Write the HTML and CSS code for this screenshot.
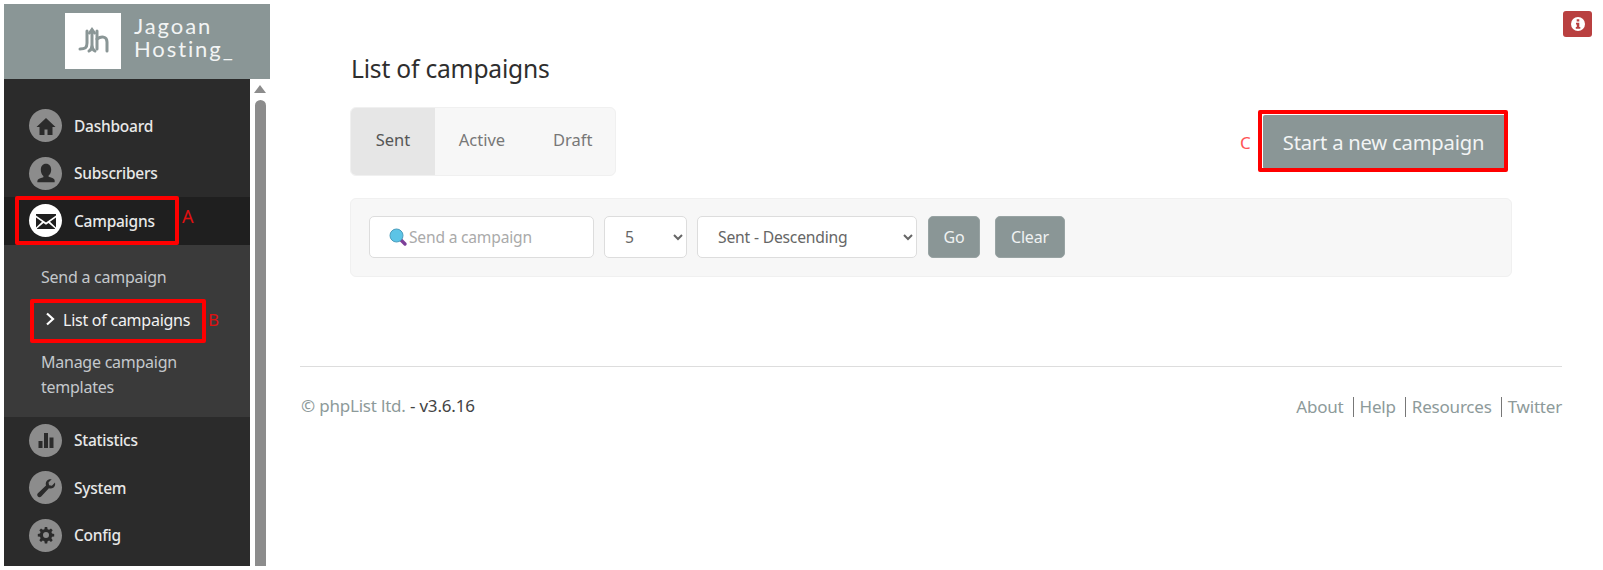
FILE: index.html
```html
<!DOCTYPE html>
<html lang="en">
<head>
<meta charset="utf-8">
<title>List of campaigns</title>
<link rel="stylesheet" href="styles.css">
</head>
<body>
<div class="page">
  <aside class="sidebar">
    <header class="brand">
      <div class="logo">
        <svg viewBox="0 0 56 56" width="56" height="56"><g fill="none" stroke="#8a9696" stroke-width="3" stroke-linecap="round"><path d="M22 18v12c0 5-2 6-7 6"/><path d="M32 18v18"/><path d="M24.500 20l2.500-3.500 2.500 3.500"/><path d="M27 20v12c0 3-1 5-3 6M27 32c0 3 1 5 3 6"/><path d="M32 26c4-3 10-3 10 3v9"/></g></svg>
      </div>
      <div class="brand-name">Jagoan<br>Hosting_</div>
    </header>
    <div class="nav-wrap">
      <nav class="nav">
        <a class="item"><span class="circle"><svg viewBox="0 0 24 24" width="24" height="24"><path fill="#2b2b2b" d="M12 4 2.500 13h3v8h5v-5.500h3V21h5v-8h3z"/></svg></span>Dashboard</a>
        <a class="item"><span class="circle"><svg viewBox="0 0 24 24" width="26" height="26"><path fill="#2b2b2b" d="M12 3.500c3 0 4.800 2.400 4.800 5.400 0 2.300-1 4.300-2.400 5.300v1.300c3.200.8 5.600 1.800 5.600 3.500v1.500H4V19.500c0-1.700 2.400-2.700 5.600-3.500v-1.300C8.200 13.700 7.200 11.700 7.200 8.900c0-3 1.800-5.400 4.800-5.400z"/></svg></span>Subscribers</a>
        <a class="item item-current"><span class="circle circle-on"><svg viewBox="0 0 24 24" width="24" height="24"><path fill="#1f1f1f" d="M2 5h20v1.500l-10 7-10-7zM2 8.500l6 4.300-6 5.700zM22 8.500v10l-6-5.700zM9.500 14l2.500 1.700 2.500-1.700 6.500 5.500v.5H3v-.5z"/></svg></span>Campaigns</a>
        <div class="sub">
          <a class="sub-item">Send a campaign</a>
          <a class="sub-item sub-active"><svg class="chev" viewBox="0 0 10 14" width="10" height="14"><path d="M2 1.500 8 7l-6 5.500" fill="none" stroke="#fff" stroke-width="2.200"/></svg>List of campaigns</a>
          <a class="sub-item">Manage campaign templates</a>
        </div>
        <a class="item"><span class="circle"><svg viewBox="0 0 24 24" width="24" height="24"><path fill="#2b2b2b" d="M4.500 13h4v7h-4zM10 5h4v15h-4zM15.500 9.500h4V20h-4z"/></svg></span>Statistics</a>
        <a class="item"><span class="circle"><svg viewBox="0 0 24 24" width="24" height="24"><path fill="#2b2b2b" d="M21 6.500c.5 2.300-.1 4.200-1.700 5.300-1.300.9-3 1-4.400.5L7.200 20.500c-.9.900-2.500.9-3.300 0-.9-.9-.9-2.300 0-3.200l8.100-7.800c-.5-1.500-.3-3.200.7-4.500C13.800 3.400 15.700 2.800 17.700 3.300L14.500 6.400l.6 2.800 2.800.6z"/></svg></span>System</a>
        <a class="item"><span class="circle"><svg viewBox="0 0 24 24" width="24" height="24"><path fill="#2b2b2b" fill-rule="evenodd" d="M10.800 4h2.400l.4 2.200 1.500.6 1.900-1.300 1.700 1.700-1.300 1.900.6 1.500 2.200.4v2.400l-2.200.4-.6 1.500 1.300 1.900-1.700 1.700-1.900-1.300-1.500.6-.4 2.200h-2.400l-.4-2.200-1.500-.6-1.900 1.300-1.700-1.700 1.300-1.900-.6-1.500-2.200-.4v-2.400l2.200-.4.6-1.500-1.300-1.900 1.700-1.700 1.900 1.300 1.500-.6zM12 9a3 3 0 1 0 0 6 3 3 0 0 0 0-6z"/></svg></span>Config</a>
      </nav>
      <div class="scrollbar"><span class="scroll-arrow"></span><span class="scroll-thumb"></span></div>
    </div>
  </aside>
  <main class="main">
    <div class="content">
      <h1 class="title">List of campaigns</h1>
      <div class="toolbar">
        <ul class="tabs">
          <li class="tab tab-active">Sent</li>
          <li class="tab tab-active-next">Active</li>
          <li class="tab">Draft</li>
        </ul>
        <a class="start-btn">Start a new campaign</a>
      </div>
      <form class="filters">
        <label class="search">
          <svg viewBox="0 0 20 20" width="20" height="20"><path d="M12.500 12.500 17 17" stroke="#7d3f98" stroke-width="3.400" stroke-linecap="round"/><circle cx="8.500" cy="8.500" r="6.500" fill="#5cc4e6" stroke="#4a9dbd"/></svg>
          <input class="search-input" type="text" placeholder="Send a campaign">
        </label>
        <select class="select select-num"><option>5</option></select>
        <select class="select select-sort"><option>Sent - Descending</option></select>
        <button class="btn btn-go" type="button">Go</button>
        <button class="btn" type="button">Clear</button>
      </form>
    </div>
    <footer class="footer">
      <div><a class="muted">© phpList ltd.</a> - v3.6.16</div>
      <div class="links"><a>About</a><a class="sep">Help</a><a class="sep">Resources</a><a class="sep">Twitter</a></div>
    </footer>
  </main>
  <span class="info"><svg viewBox="0 0 16 16" width="16" height="16"><circle cx="8" cy="8" r="7" fill="#fff"/><path fill="#b94040" d="M6.700 3.300h2.600v2.200H6.700zM6 6.700h3.300v4.300h1v1.700H5.800V11h1V8.400H6z"/></svg></span>
  <span class="mark mark-a"></span><span class="tag tag-a">A</span>
  <span class="mark mark-b"></span><span class="tag tag-b">B</span>
  <span class="mark mark-c"></span><span class="tag tag-c">C</span>
</div>
</body>
</html>
```
FILE: styles.css
```css
* { box-sizing: border-box; }
html, body { margin: 0; height: 100%; overflow: hidden; background: #fff; }
body { font-family: "Noto Sans", "Open Sans", sans-serif; color: #333; }
a { color: inherit; text-decoration: none; }

.page { position: relative; display: flex; width: 1603px; height: 570px; padding: 4px 0 4px 4px; }

.sidebar { width: 266px; display: flex; flex-direction: column; flex: none; }
.brand { height: 75px; background: #8a9696; display: flex; align-items: center; padding: 0 0 0 61px; gap: 13px; flex: none; }
.logo { width: 56px; height: 56px; background: #fff; flex: none; margin-top: -1px; }
.logo svg { display: block; }
.brand-name { font-family: "Lato", sans-serif; color: #f2f4f4; font-size: 22px; line-height: 23px; letter-spacing: 1.900px; margin-top: -10px; }

.nav-wrap { flex: 1; display: flex; min-height: 0; }
.nav { width: 246px; background: #2b2b2b; padding-top: 23px; flex: none; }
.item { display: flex; align-items: center; height: 47.500px; padding-left: 25px; color: #e8e8e8; font-size: 15.500px; font-weight: 500; gap: 12px; letter-spacing: -.25px; }
.item-current { background: #1f1f1f; }
.circle { width: 33px; height: 33px; border-radius: 50%; background: #8c8c8c; display: flex; align-items: center; justify-content: center; flex: none; }
.circle-on { background: #fff; }
.sub { background: #3a3a3a; padding: 20px 0 0; height: 172px; }
.sub-item { display: block; padding: 0 30px 0 37px; color: #c4c8cc; font-size: 16px; line-height: 25px; margin-bottom: 18px; letter-spacing: -.25px; }
.sub-active { color: #f2f2f2; padding-left: 41px; margin-bottom: 17px; display: flex; align-items: center; gap: 8px; white-space: nowrap; }
.chev { flex: none; margin-top: -3px; }

.scrollbar { width: 20px; display: flex; flex-direction: column; align-items: center; background: #fff; flex: none; }
.scroll-arrow { width: 0; height: 0; border-left: 6px solid transparent; border-right: 6px solid transparent; border-bottom: 8px solid #8c8c8c; margin-top: 6px; }
.scroll-thumb { flex: 1; width: 11px; margin-top: 7px; background: #8c8c8c; border-radius: 6px 6px 0 0; }

.main { flex: 1; min-width: 0; padding: 0 41px 0 30px; }
.content { padding: 0 50px; }
.title { font-size: 24.600px; font-weight: 400; line-height: 32px; margin: 49px 0 0 1px; color: #2e2e2e; letter-spacing: -.2px; }
.toolbar { display: flex; justify-content: space-between; align-items: center; margin-top: 22px; height: 69px; }
.tabs { list-style: none; margin: 0; padding: 0; display: flex; height: 69px; width: 266px; background: #f7f7f7; border: 1px solid #f0f0f0; border-radius: 6px; overflow: hidden; }
.tab { display: flex; align-items: center; justify-content: center; font-size: 16.500px; color: #777; padding: 0 0 4px 26px; }
.tab-active { width: 84px; background: #e6e6e6; color: #555; padding: 0 0 4px; }
.tab-active-next { width: 92px; padding: 0 0 4px 2px; }
.start-btn { width: 243px; height: 54px; margin: 0 6px 0 0; padding-right: 2px; background: #8a9696; color: #f2f4f4; display: flex; align-items: center; justify-content: center; font-size: 20.200px; letter-spacing: -.2px; border-radius: 2px; }
.filters { display: flex; align-items: center; margin-top: 22px; height: 79px; padding: 0 18px 2px 18px; background: #f7f7f7; border: 1px solid #f0f0f0; border-radius: 6px; }
.search { display: flex; align-items: center; width: 225px; height: 42px; background: #fff; border: 1px solid #ddd; border-radius: 5px; padding-left: 18px; gap: 1px; flex: none; }
.search svg { flex: none; }
.search-input { border: 0; outline: 0; flex: 1; min-width: 0; font: inherit; font-size: 15.600px; letter-spacing: -.2px; background: transparent; padding: 0; }
.search-input::placeholder { color: #aaa; opacity: 1; }
.select { height: 42px; background-color: #fff; border: 1px solid #ddd; border-radius: 5px; font: inherit; font-size: 15.700px; letter-spacing: -.2px; color: #666; flex: none; margin-left: 10px; padding: 0 0 0 16px; }
.select-num { width: 83px; }
.select-sort { width: 220px; }
.btn { height: 42px; margin-left: 15px; padding: 0 15px; background: #8a9696; color: #f0f2f2; border: 1px solid #98a3a3; border-radius: 5px; font: inherit; font-size: 16px; letter-spacing: -.2px; flex: none; }
.btn-go { margin-left: 11px; width: 52px; padding: 0; }

.footer { display: flex; justify-content: space-between; align-items: center; margin-top: 89px; padding: 26px 0 0 1px; border-top: 1px solid #ddd; font-size: 17px; line-height: 26px; color: #444; letter-spacing: -.2px; }
.muted { color: #8d9a9a; }
.links { color: #8d9a9a; display: flex; }
.sep { border-left: 1px solid #777; margin-left: 9px; padding-left: 6px; line-height: 20px; margin-top: 1px; }
.links a:first-child { line-height: 20px; margin-top: 1px; }

.info { position: absolute; left: 1563px; top: 11px; width: 29px; height: 26px; background: #b94040; border-radius: 3px; display: flex; align-items: center; justify-content: center; }

.mark { position: absolute; border: 4px solid #f00; border-radius: 2px; pointer-events: none; }
.mark-a { left: 15px; top: 196px; width: 164px; height: 49px; }
.mark-b { left: 30px; top: 299px; width: 176px; height: 44px; }
.mark-c { left: 1258px; top: 110px; width: 250px; height: 62px; }
.tag { position: absolute; font-size: 17px; line-height: 18px; color: #e01010; }
.tag-a { left: 182px; top: 207px; font-size: 18px; }
.tag-b { left: 208px; top: 311px; }
.tag-c { left: 1240px; top: 134px; color: #f55; }
```
